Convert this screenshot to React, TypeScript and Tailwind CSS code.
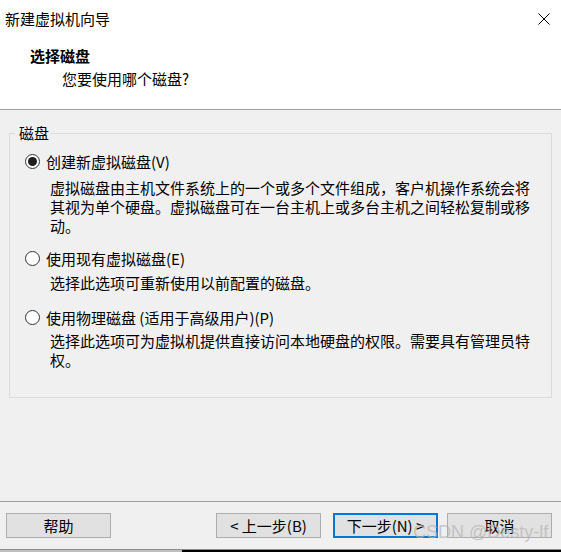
import React from "react";

const OPTIONS: { label: string; desc: string; checked: boolean; rowTop: string; descTop: string }[] = [
  {
    label: "创建新虚拟磁盘(V)",
    desc: "虚拟磁盘由主机文件系统上的一个或多个文件组成，客户机操作系统会将其视为单个硬盘。虚拟磁盘可在一台主机上或多台主机之间轻松复制或移动。",
    checked: true,
    rowTop: "mt-[9px]",
    descTop: "mt-[6px]",
  },
  {
    label: "使用现有虚拟磁盘(E)",
    desc: "选择此选项可重新使用以前配置的磁盘。",
    checked: false,
    rowTop: "mt-[14px]",
    descTop: "mt-[4px]",
  },
  {
    label: "使用物理磁盘 (适用于高级用户)(P)",
    desc: "选择此选项可为虚拟机提供直接访问本地硬盘的权限。需要具有管理员特权。",
    checked: false,
    rowTop: "mt-[16px]",
    descTop: "mt-[3px]",
  },
];

function Radio({ checked }: { checked: boolean }) {
  return (
    <span className="w-[15px] h-[15px] rounded-full border border-[#333333] bg-white flex items-center justify-center shrink-0 -translate-y-px">
      {checked && <span className="w-[9px] h-[9px] rounded-full bg-[#1f1f1f]" />}
    </span>
  );
}

function WinButton({ label, primary }: { label: string; primary?: boolean }) {
  return (
    <button
      type="button"
      className={
        primary
          ? "w-[105px] h-[25px] flex items-center justify-center bg-[#e1e1e1] border-2 border-[#0078d7] text-[15px] leading-[20px] text-black"
          : "w-[105px] h-[25px] flex items-center justify-center bg-[#e1e1e1] border border-[#adadad] text-[15px] leading-[20px] text-black"
      }
    >
      {label}
    </button>
  );
}

export default function App() {
  return (
    <div className="w-[561px] h-[552px] bg-[#f0f0f0] flex flex-col relative overflow-hidden text-black font-['Noto_Sans_CJK_SC','Noto_Sans_CJK_JP',sans-serif]">
      {/* title + header */}
      <div className="h-[109px] bg-white shrink-0">
        <div className="h-[38px] flex items-center justify-between pl-[5px] pr-[11px]">
          <span className="text-[15px] leading-[20px]">新建虚拟机向导</span>
          <svg width="12" height="12" viewBox="0 0 12 12" className="block">
            <path d="M0.5 0.5L11.5 11.5M11.5 0.5L0.5 11.5" stroke="#000" strokeWidth="1" />
          </svg>
        </div>
        <div className="pl-[30px] mt-[8px] text-[15px] leading-[20px] font-bold">选择磁盘</div>
        <div className="pl-[62px] mt-[3px] text-[15px] leading-[20px]">您要使用哪个磁盘?</div>
      </div>
      <div className="h-px bg-[#a0a0a0] shrink-0" />

      {/* body */}
      <div className="h-[391px] shrink-0 px-[9px] pt-[13px]">
        <fieldset className="h-[275px] border border-[#dcdcdc] m-0 p-0">
          <legend className="ml-[5px] pl-[4px] pr-[1px] text-[15px] leading-[20px]">磁盘</legend>
          {OPTIONS.map((o) => (
            <div key={o.label}>
              <div className={`${o.rowTop} h-[20px] flex items-center pl-[15px] gap-[6px]`}>
                <Radio checked={o.checked} />
                <span className="text-[15px] leading-[20px] whitespace-nowrap">{o.label}</span>
              </div>
              <p className={`${o.descTop} ml-[40px] w-[485px] text-[15px] leading-[19px]`}>{o.desc}</p>
            </div>
          ))}
        </fieldset>
      </div>
      <div className="h-px bg-[#a0a0a0] shrink-0" />

      {/* buttons */}
      <div className="h-[47px] shrink-0 flex items-start pt-[11px]">
        <div className="ml-[6px]">
          <WinButton label="帮助" />
        </div>
        <div className="ml-auto mr-[9px] flex">
          <WinButton label="< 上一步(B)" />
          <div className="ml-[12px]">
            <WinButton label="下一步(N) >" primary />
          </div>
          <div className="ml-[9px]">
            <WinButton label="取消" />
          </div>
        </div>
      </div>

      {/* screen edge below the window */}
      <div className="h-px bg-[#8c8c8c] shrink-0" />
      <div className="flex-1 flex">
        <div className="w-[182px] bg-[#bfbfbf]" />
        <div className="flex-1 bg-black" />
      </div>

      {/* watermark */}
      <span className="absolute left-[413px] top-[520px] text-[18px] leading-[24px] whitespace-nowrap text-[#b4b4b4]/70 pointer-events-none font-['Liberation_Sans',sans-serif]">
        CSDN @Desty-lf
      </span>
    </div>
  );
}
